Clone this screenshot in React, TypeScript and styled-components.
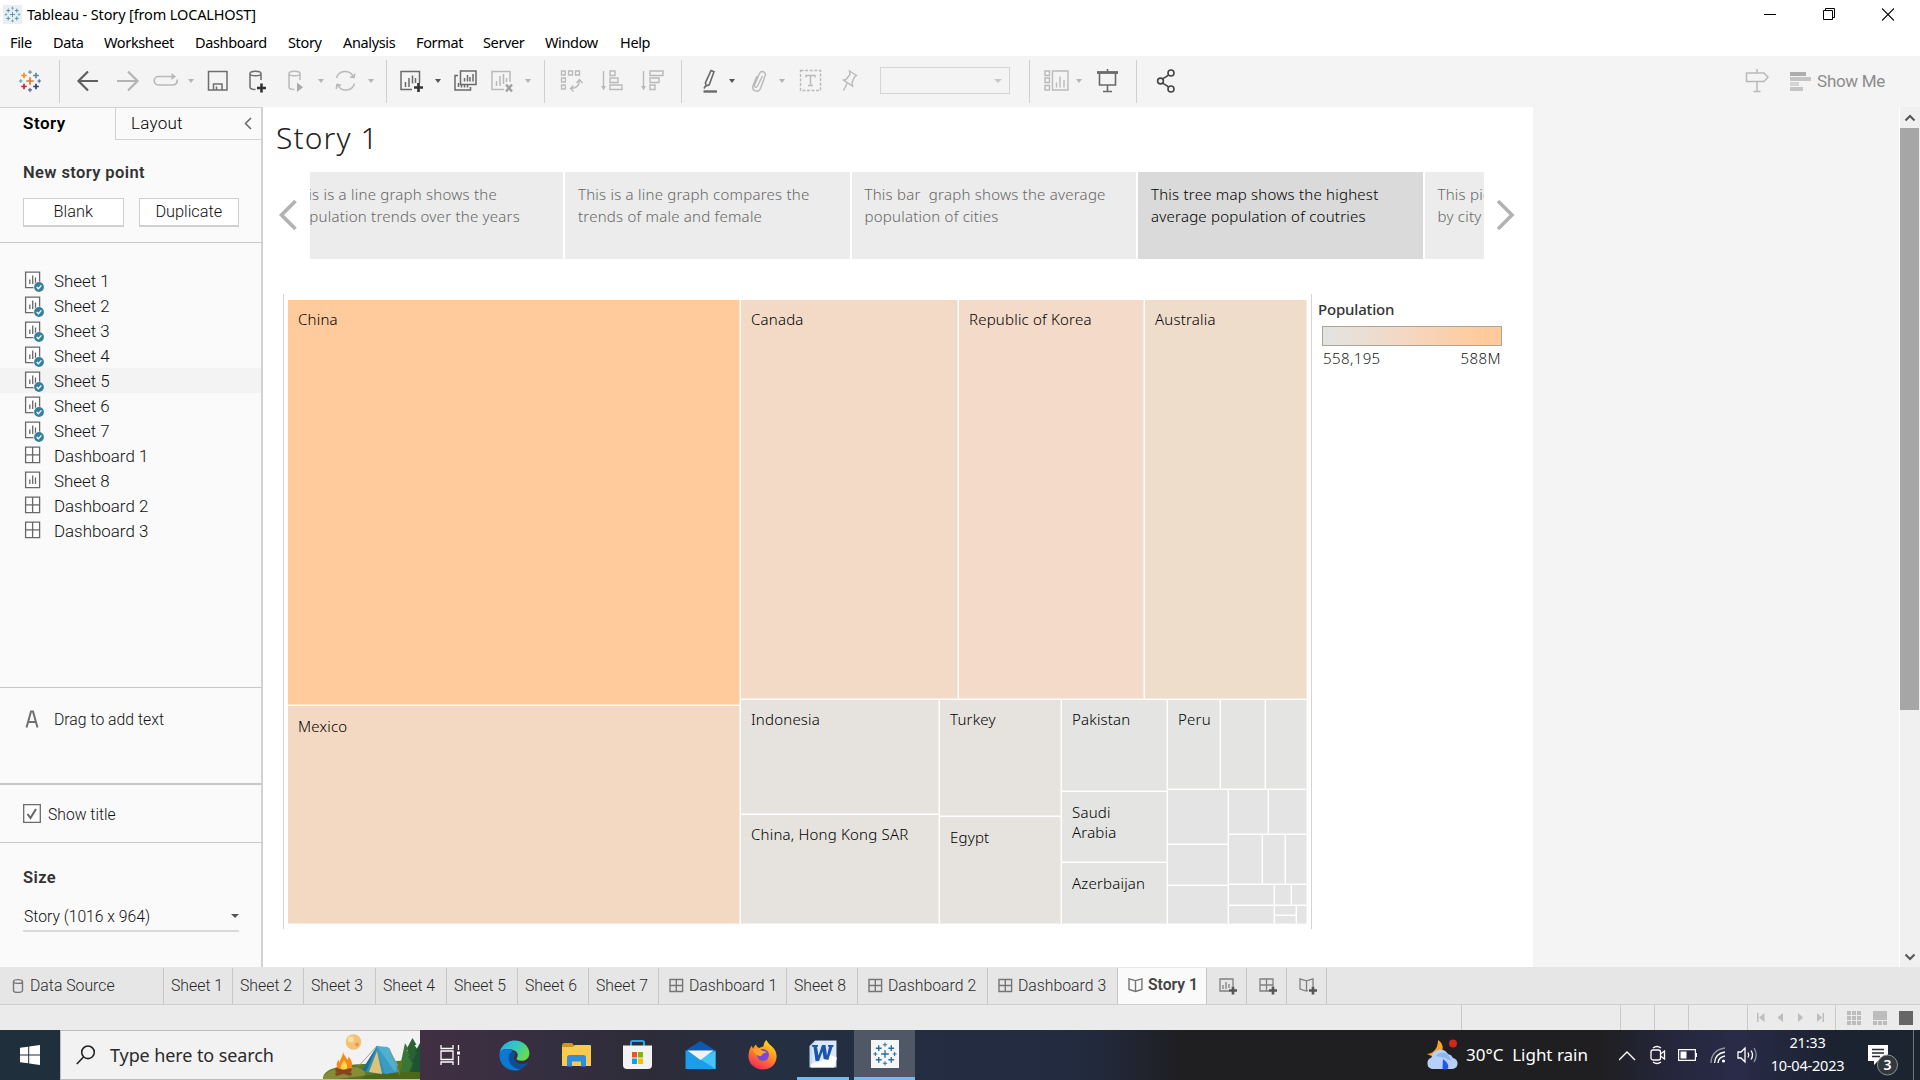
import React from "react";
import styled, { createGlobalStyle, css } from "styled-components";

const Global = createGlobalStyle`
  * { box-sizing: border-box; }
  html, body { margin: 0; padding: 0; overflow: hidden; background: #fff; }
  body { font-family: "Noto Sans", sans-serif; }
  svg { display: block; flex: none; }
`;

const UI = `Roboto, "Liberation Sans", sans-serif`;
const SYS = `"Noto Sans", sans-serif`;

/* ---------- shell ---------- */
const Shell = styled.div`
  width: 1920px; height: 1080px; display: flex; flex-direction: column; overflow: hidden; background: #fff;
`;
const TitleBar = styled.header`
  height: 28px; display: flex; align-items: center; padding: 1px 26px 0 3px; flex: none;
`;
const TitleText = styled.span`
  font: 400 14.5px/20px ${SYS}; letter-spacing: -0.14px; color: #000; margin: -1px 0 0 5px; flex: 1;
`;
const WindowButtons = styled.div`
  display: flex; gap: 47px; align-items: center; margin-top: -1px;
`;
const MenuBar = styled.nav`
  height: 28px; display: flex; gap: 21px; padding: 4px 10px 0; flex: none;
`;
const MenuItem = styled.span<{ $w: number }>`
  width: ${p => p.$w}px; font: 400 14.5px/20px ${SYS}; letter-spacing: -0.36px; color: #000; white-space: nowrap;
`;
const ToolBar = styled.div`
  height: 51px; flex: none; background: #f4f4f4; display: flex; align-items: center; padding-left: 18px;
`;
const Tool = styled.div<{ $w: number; $c?: string }>`
  width: ${p => p.$w}px; flex: none; height: 24px; margin-top: -2px; display: flex; align-items: center; color: ${p => p.$c || "#b9b9b9"};
`;
const ToolDivider = styled.div<{ $w: number }>`
  width: ${p => p.$w}px; flex: none; height: 43px; border-left: 1px solid #d0d0d0;
`;
const CaretIcon = styled.i<{ $c?: string; $r?: number }>`
  width: 0; height: 0; display: block; border: ${p => p.$r || 3.5}px solid transparent; border-bottom: 0;
  border-top: 4.5px solid ${p => p.$c || "#b4b4b4"};
`;
const ToolSelect = styled.div`
  width: 130px; height: 27px; margin-top: -2px; border: 1px solid #d4d4d4; display: flex; align-items: center; justify-content: flex-end; padding-right: 7px;
`;
const ShowMe = styled.div`
  display: flex; align-items: center; gap: 6px; margin: -2px 0 0 21px;
  font: 400 17px/22px ${UI}; letter-spacing: -0.3px; color: #8c8c8c;
`;

/* ---------- side pane ---------- */
const Main = styled.div` flex: 1; min-height: 0; display: flex; `;
const Side = styled.aside`
  width: 263px; flex: none; border-right: 2px solid #d2d2d2; background: #fafafa; display: flex; flex-direction: column;
  font: 300 17px/25px ${UI}; color: #111;
`;
const SideTabs = styled.div` display: flex; height: 33px; flex: none; border-top: 1px solid #d2d2d2; `;
const SideTab = styled.div<{ $active?: boolean }>`
  display: flex; align-items: center; color: #000;
  ${p => p.$active
    ? css`width: 115px; padding: 0 0 2px 23px; font-weight: 600; font-size: 17px; letter-spacing: .5px;`
    : css`flex: 1; padding: 0 9px 0 15px; border-left: 1px solid #d2d2d2; border-bottom: 1px solid #d2d2d2; justify-content: space-between; font-size: 17px; letter-spacing: .25px;`}
`;
const NewPoint = styled.section`
  height: 103px; padding: 19px 22px 0 23px; border-bottom: 1px solid #c8c8c8; flex: none;
`;
const Heading = styled.h3` margin: 0; font: 600 16.5px/27px ${UI}; letter-spacing: 0.4px; color: #333; `;
const ButtonRow = styled.div` display: flex; gap: 15px; margin-top: 12px; `;
const Button = styled.button`
  flex: 1; height: 29px; padding: 0; background: #fff; border: 1px solid #cfcfcf; border-bottom-width: 2px; font: 300 16.3px/24px ${UI}; color: #111;
`;
const SheetList = styled.ul` list-style: none; margin: 0; padding: 25px 0 0; height: 445px; border-bottom: 1px solid #c8c8c8; flex: none; `;
const SheetRow = styled.li<{ $hot?: boolean }>`
  height: 25px; display: flex; align-items: center; gap: 9px; padding-left: 24px; font-size: 16.9px; line-height: 26px;
  background: ${p => (p.$hot ? "#f3f3f3" : "transparent")};
  span { padding-top: 1px; }
`;
const DragText = styled.section`
  height: 97px; flex: none; border-bottom: 2px solid #c8c8c8; display: flex; padding: 19px 0 0 25px; gap: 15px; font-size: 15.8px;
`;
const TitleToggle = styled.label`
  height: 58px; flex: none; border-bottom: 1px solid #c8c8c8; display: flex; align-items: center; padding-left: 23px; gap: 7px; font-size: 15.7px; line-height: 20px;
  span { padding-top: 2px; }
`;
const SizeBox = styled.section` flex: 1; padding: 21px 22px 0 23px; `;
const SizeSelect = styled.div`
  height: 33px; margin-top: 8px; border-bottom: 2px solid #dadada; display: flex; align-items: center; justify-content: space-between;
  padding: 3px 0 0 1px; font-size: 15.7px;
`;

/* ---------- story ---------- */
const Story = styled.main` width: 1270px; flex: none; background: #fff; padding-left: 13px; `;
const StoryTitle = styled.h1`
  margin: 0; height: 65px; padding-top: 9px; font: 350 30px/44px ${SYS}; color: #222; letter-spacing: 1.1px;
`;
const Navigator = styled.div` display: flex; height: 87px; align-items: center; `;
const NavArrow = styled.div<{ $w: number; $pad: number }>` width: ${p => p.$w}px; padding: 0 0 2px ${p => p.$pad}px; flex: none; `;
const CaptionStrip = styled.div`
  width: 1174px; height: 87px; overflow: hidden; display: flex; gap: 2px; justify-content: flex-start;
`;
const Caption = styled.div<{ $on?: boolean; $cut?: number }>`
  flex: none; width: ${p => (p.$cut ? 285 : 284.5)}px; height: 87px; margin-left: ${p => (p.$cut ? -p.$cut : 0)}px; padding: 11px 13px;
  background: ${p => (p.$on ? "#dadada" : "#ececec")}; color: ${p => (p.$on ? "#000" : "#666")};
  font: 300 15px/22px ${SYS}; letter-spacing: 0.23px; white-space: pre;
`;
const VizRow = styled.div` display: flex; margin: 35px 0 0 7px; height: 635px; `;
const MapFrame = styled.div`
  width: 1029px; flex: none; border-left: 1px solid #d4d4d4; border-right: 1px solid #d4d4d4; padding: 5px 4px 5px 3px;
`;
const Split = styled.div<{ $dir: "row" | "column"; $size?: number }>`
  display: flex; flex-direction: ${p => p.$dir}; min-width: 0; min-height: 0;
  flex: ${p => (p.$size ? `0 0 ${p.$size}px` : "1 1 0")};
`;
const Cell = styled.div<{ $size?: number; $bg?: string; $pt?: number }>`
  flex: ${p => (p.$size ? `0 0 ${p.$size}px` : "1 1 0")}; min-width: 0; min-height: 0; overflow: hidden;
  background: ${p => p.$bg || "#e4e4e4"};
  border: solid #fff; border-width: 1px 0 0 1px; box-shadow: inset -1px -1px 0 rgba(255,255,255,.45);
  padding: ${p => p.$pt || 9}px 0 0 10px; font: 300 15px/20px ${SYS}; letter-spacing: 0.2px; color: #000;
`;
const Legend = styled.div` padding: 5px 0 0 6px; width: 191px; font: 300 15px/20px ${SYS}; color: #222; `;
const LegendTitle = styled.div` font-weight: 500; color: #333; letter-spacing: -0.18px; `;
const Ramp = styled.div`
  margin: 7px 0 2px 4px; height: 20px; width: 180px; border: 1px solid #aaa895;
  background: linear-gradient(90deg, #e3e3e3, #eadfd6 20%, #f5d6bf 50%, #ffcb9d 88%);
`;
const RampLabels = styled.div` display: flex; justify-content: space-between; padding-left: 5px; width: 183px; letter-spacing: .4px; `;
const Gutter = styled.div` flex: 1; background: #f4f4f4; `;
const Scroll = styled.div`
  width: 21px; background: #f0f0f0; border-left: 1px solid #fff; display: flex; flex-direction: column; justify-content: space-between;
`;
const ScrollBtn = styled.div` height: 21px; display: flex; align-items: center; justify-content: center; `;
const Thumb = styled.div` height: 582px; width: 19px; background: #a6a6a6; margin-bottom: auto; `;

/* ---------- bottom ---------- */
const SheetTabs = styled.div` height: 38px; flex: none; background: #e6e6e6; display: flex; border-bottom: 1px solid #cfcfcf; padding-top: 1px; `;
const SheetTab = styled.div<{ $w: number; $on?: boolean; $pl?: number }>`
  width: ${p => p.$w}px; flex: none; padding: 0 0 ${p => (p.$on ? 3 : 0)}px ${p => p.$pl ?? 7}px; border-right: 1px solid #c6c6c6; display: flex; align-items: center; gap: 5px;
  font: ${p => (p.$on ? 600 : 300)} ${p => (p.$on ? 15.7 : 15.8)}px/20px ${UI}; color: ${p => (p.$on ? "#444" : "#2a2a2a")}; background: ${p => (p.$on ? "#fafafa" : "transparent")}; white-space: nowrap;
`;
const Status = styled.div` height: 25px; flex: none; background: #ebebeb; display: flex; padding-left: 1461px; `;
const StatusCell = styled.div<{ $w: number; $pl?: number; $gap?: number }>`
  width: ${p => p.$w}px; flex: none; border-left: 1px solid #c9c9c9; display: flex; align-items: center; padding-left: ${p => p.$pl || 0}px; gap: ${p => p.$gap || 0}px;
`;
const TaskBar = styled.footer`
  height: 50px; flex: none; display: flex;
  background: linear-gradient(90deg, #1f2f3c 0 60px, #412f42 420px, #332f40 560px, #2e2b38 650px, #242f42 770px, #232b40 1080px, #1f1f22 1180px, #1f1f22 1600px, #26273f 1680px, #292b48 1740px, #1b2230 1830px, #1b2530);
`;
const StartBtn = styled.div` width: 60px; display: flex; align-items: center; justify-content: center; `;
const Search = styled.div`
  width: 360px; background: #f2f2f2; border: 1px solid #bcbcbc; border-right: 0; display: flex; align-items: center; padding-left: 15px;
`;
const SearchText = styled.span` font: 400 18px/26px ${SYS}; color: #2a2a2a; margin-left: 14px; flex: 1; white-space: nowrap; letter-spacing: -0.1px; `;
const TaskButton = styled.div<{ $w: number; $on?: boolean; $run?: boolean }>`
  width: ${p => p.$w}px; height: 50px; flex: none; display: flex; align-items: center; justify-content: center;
  background: ${p => (p.$on ? "#505766" : "transparent")};
  border-bottom: ${p => (p.$run || p.$on ? "3px solid #76b9ed" : "0")};
`;
const Spacer = styled.div<{ $w?: number }>` ${p => (p.$w ? css`width: ${p.$w}px; flex: none;` : css`flex: 1;`)} `;
const Weather = styled.div`
  display: flex; align-items: center; font: 400 17px/24px ${SYS}; color: #fff; width: 193px; flex: none; white-space: pre; letter-spacing: -0.02px;
`;
const Tray = styled.div` display: flex; align-items: center; width: 151px; flex: none; `;
const TraySlot = styled.div<{ $w: number }>` width: ${p => p.$w}px; flex: none; `;
const Clock = styled.div`
  width: 75px; flex: none; text-align: center; color: #fff; font: 400 14.5px/23px ${SYS}; padding-top: 1px; letter-spacing: -0.2px; white-space: nowrap;
`;
const Notice = styled.div` width: 68px; padding: 13px 0 0 21px; flex: none; display: flex; `;
const Peek = styled.div` width: 1px; background: #6d737b; `;

/* ---------- icons ---------- */
const crosses: [number, number, number, string][] = [
  [12, 12, 4, "#e8762c"], [5.5, 6, 3, "#eb9129"], [18.5, 6, 3, "#5b879b"], [5.5, 18, 3, "#c72037"], [18.5, 18, 3, "#1f447e"],
  [12, 2.3, 2.2, "#7099a6"], [12, 21.7, 2.2, "#5b6591"], [2, 12, 2, "#7099a6"], [22, 12, 2, "#5b6591"],
];
const Logo = ({ size, mono, bg }: { size: number; mono?: string; bg?: string }) => (
  <svg width={size} height={size} viewBox={bg ? "-2.5 -2.5 29 29" : "-1 -1 26 26"}>
    {bg && <rect x="-2.5" y="-2.5" width="29" height="29" fill={bg} />}
    {crosses.map(([x, y, r, c], i) => (
      <path key={i} d={`M${x - r} ${y}h${2 * r}M${x} ${y - r}v${2 * r}`} stroke={mono || c} strokeWidth={(r > 2.5 ? 1.8 : 1.3) * (mono ? 0.8 : 1)} />
    ))}
  </svg>
);
const S = ({ w = 24, h = 24, sw = 1.6, children }: { w?: number; h?: number; sw?: number; children: React.ReactNode }) => (
  <svg width={w} height={h} viewBox={`0 0 ${w} ${h}`} fill="none" stroke="currentColor" strokeWidth={sw}>{children}</svg>
);
const Caret = ({ w, c }: { w: number; c?: string }) => <Tool $w={w}><CaretIcon $c={c} /></Tool>;

const SheetIcon = ({ done }: { done?: boolean }) => (
  <svg width="21" height="23" viewBox="0 0 21 23" fill="none" stroke="#686868" strokeWidth="1.3">
    <path d="M1.6 3.100h14v15.600h-14z" fill="#fff" /><path d="M5.800 10.500v4.500M8.700 6.500v8.500M11.500 8.500v6.500" />
    {done && <><circle cx="15" cy="18" r="5.600" fill="#fafafa" stroke="none" /><circle cx="15" cy="18" r="4.900" fill="#357f9f" stroke="none" /><path d="M12.700 18l1.700 1.800 3-3.400" stroke="#fff" /></>}
  </svg>
);
const DashIcon = ({ pane }: { pane?: boolean }) => pane ? (
  <svg width="21" height="23" viewBox="0 0 21 23" fill="none" stroke="#686868" strokeWidth="1.3"><path d="M1.6 3.100h14v15.600h-14zM8.600 3.100v15.600" fill="#fff" /><path d="M1.6 10.900h14" /></svg>
) : (
  <svg width="15" height="16" viewBox="0 0 15 16" fill="none" stroke="#757575" strokeWidth="1.4"><path d="M1 1.500h12.600v12H1zM7.300 1.500v12M1 7.500h12.600" /></svg>
);
const BookIcon = () => (
  <svg width="15" height="16" viewBox="0 0 15 16" fill="none" stroke="#757575" strokeWidth="1.4"><path d="M7.500 3.600L1 1.800v10.600l6.500 2 6.400-2V1.800zM7.500 3.600v10.800" /></svg>
);
const Plus = () => <path d="M14 9.500v8M10 13.500h8" stroke="#555" strokeWidth="2.600" />;

const warm = "#e4e4e3";

const FullMap = styled.div` display: flex; height: 625px; width: 1020px; `;
const MiniCell = styled(Cell)` padding: 0; `;

const TreeMap = () => (
  <FullMap>
    <Split $dir="column" $size={453}>
      <Cell $size={406} $bg="#ffcb9d">China</Cell>
      <Cell $bg="#f4d9c2" $pt={10}>Mexico</Cell>
    </Split>
    <Split $dir="column">
      <Split $dir="row" $size={400}>
        <Cell $size={218} $bg="#f3dac7">Canada</Cell>
        <Cell $size={186} $bg="#f3dac9">Republic of Korea</Cell>
        <Cell $bg="#efddcc">Australia</Cell>
      </Split>
      <Split $dir="row">
        <Split $dir="column" $size={199}>
          <Cell $size={115} $bg="#e6e3de">Indonesia</Cell>
          <Cell $bg="#e6e3de">China, Hong Kong SAR</Cell>
        </Split>
        <Split $dir="column" $size={122}>
          <Cell $size={117} $bg="#e6e3de">Turkey</Cell>
          <Cell $bg="#e6e3de" $pt={10}>Egypt</Cell>
        </Split>
        <Split $dir="column" $size={106}>
          <Cell $size={92} $bg={warm}>Pakistan</Cell>
          <Cell $size={71} $bg={warm} $pt={10}>Saudi<br />Arabia</Cell>
          <Cell $bg={warm} $pt={10}>Azerbaijan</Cell>
        </Split>
        <Split $dir="column">
          <Split $dir="row" $size={90}>
            <Cell $size={53} $bg={warm}>Peru</Cell><Cell $size={45} $bg={warm} /><Cell $bg={warm} />
          </Split>
          <Split $dir="row">
            <Split $dir="column" $size={61}>
              <Cell $size={55} /><Cell $size={41} /><Cell />
            </Split>
            <Split $dir="column">
              <Split $dir="row" $size={45}><Cell $size={40} /><Cell /></Split>
              <Split $dir="row" $size={50}><Cell $size={34} /><Cell $size={23} /><Cell /></Split>
              <Split $dir="row">
                <Split $dir="column" $size={46}><MiniCell $size={21} /><MiniCell /></Split>
                <Split $dir="column">
                  <Split $dir="row" $size={21}><MiniCell $size={17} /><MiniCell /></Split>
                  <Split $dir="row">
                    <Split $dir="column" $size={22}><MiniCell $size={10} /><MiniCell /></Split>
                    <MiniCell />
                  </Split>
                </Split>
              </Split>
            </Split>
          </Split>
        </Split>
      </Split>
    </Split>
  </FullMap>
);

const sheets: [string, "d" | "s" | "b"][] = [
  ["Sheet 1", "d"], ["Sheet 2", "d"], ["Sheet 3", "d"], ["Sheet 4", "d"], ["Sheet 5", "d"], ["Sheet 6", "d"], ["Sheet 7", "d"],
  ["Dashboard 1", "b"], ["Sheet 8", "s"], ["Dashboard 2", "b"], ["Dashboard 3", "b"],
];
const menus: [string, number][] = [["File", 22], ["Data", 30], ["Worksheet", 70], ["Dashboard", 72], ["Story", 34], ["Analysis", 52], ["Format", 46], ["Server", 41], ["Window", 54], ["Help", 32]];
const tabs: [string, number, boolean][] = [["Sheet 1", 69, false], ["Sheet 2", 71, false], ["Sheet 3", 72, false], ["Sheet 4", 71, false], ["Sheet 5", 71, false], ["Sheet 6", 71, false], ["Sheet 7", 70, false], ["Dashboard 1", 128, true], ["Sheet 8", 71, false], ["Dashboard 2", 130, true], ["Dashboard 3", 130, true]];

const Cyl = <path d="M2 4.500C2 1.500 13 1.500 13 4.500S2 7.500 2 4.500zV18c0 2 2.500 2.500 5.500 2.500M13 4.500V11" />;

const ToolIcons = () => (
  <ToolBar>
    <Tool $w={41}><Logo size={24} /></Tool>
    <ToolDivider $w={17} />
    <Tool $w={40} $c="#5f5f5f"><S sw={2.2}><path d="M22 12H3M12 2.500L2.500 12l9.500 9.500" /></S></Tool>
    <Tool $w={37} $c="#b4b4b4"><S sw={2.2}><path d="M1 12h20M12 2.500l9.500 9.500-9.500 9.500" /></S></Tool>
    <Tool $w={35}><S w={26} sw={1.7}><path d="M19 7.500H5.500a4.200 4.200 0 0 0 0 8.500H20a4.200 4.200 0 0 0 4-5.500" /><path d="M18.500 4v7l4.500-3.500z" fill="currentColor" stroke="none" /></S></Tool>
    <Caret w={19} />
    <Tool $w={41} $c="#6e6e6e"><S w={22} sw={1.5}><path d="M1.500 2.500h18.500v18.500h-18.500zM6.500 21v-6h8.500v6M9.500 21v-3.500" /></S></Tool>
    <Tool $w={39} $c="#6e6e6e"><S w={22} sw={1.500}>{Cyl}<path d="M13.500 14.500v9M9 19h9" stroke="#333" strokeWidth="2.600" /></S></Tool>
    <Tool $w={31}><S w={22} sw={1.500}>{Cyl}<path d="M10 13.500v9.500l6-4.700z" fill="#aaa" stroke="none" /></S></Tool>
    <Caret w={16} />
    <Tool $w={34}><S w={23} sw={1.500}><path d="M2.500 9a9 9 0 0 1 17-1M20.500 14.500a9 9 0 0 1-17 1M20.800 4.500l-.8 4-4-.8M2.200 20l.8-4.500 4 .8" /></S></Tool>
    <Caret w={18} />
    <ToolDivider $w={13} />
    <Tool $w={36} $c="#6a6a6a"><S w={25} sw={1.500}><path d="M13 20.500H2V2.500h18.500V14M6.500 13v5M10 9v9M13.500 6.500v8M16.500 9v5" /><path d="M19.500 14v9M15 18.500h9" stroke="#333" strokeWidth="2.600" /></S></Tool>
    <Caret w={18} c="#555" />
    <Tool $w={37} $c="#6a6a6a"><S w={26} sw={1.500}><path d="M7.500 2h15.500v13.500h-15.500zM11.500 12.500V9M14.500 12.500V6M17 12.500V8M20 12.500V5M5 6.500H2V21h15.500v-3M5.500 18v-4M8.500 18.500v-2.500M11.500 18.500v-2.500M14.500 18.500v-2.500" /></S></Tool>
    <Tool $w={35}><S w={25} sw={1.500}><path d="M14 20.500H2V2.500h18V13M6.500 12v5M10 7v10M13.500 5v10M16.500 9v4" /><path d="M16 15.500l6 7M22 15.500l-6 7" stroke="#a0a0a0" strokeWidth="2.400" /></S></Tool>
    <Caret w={19} />
    <ToolDivider $w={16} />
    <Tool $w={41}><S w={24} sw={1.300}><path d="M1.500 2h3.800v4H1.500zM8.500 2h4v4h-4zM15.500 2h4v4h-4zM1.500 9h3.800v4H1.500zM1.500 16h3.800v4H1.500zM10.500 19.500c6 0 9-3 9-8.500M13.500 16.500l-3 3 3 3M16.500 14l3-3.500 3 3.500" /></S></Tool>
    <Tool $w={40}><S w={24} sw={1.400}><path d="M2.500 2v17M9 2h5v4.500H9zM9 9h8v4.500H9zM9 16h12v4.500H9z" /><path d="M0 17l2.500 4.500L5 17z" fill="currentColor" stroke="none" /></S></Tool>
    <Tool $w={40}><S w={24} sw={1.400}><path d="M2.500 2v17M9 2h13v4.500H9zM9 9h9v4.500H9zM9 16h5v4.500H9z" /><path d="M0 17l2.500 4.500L5 17z" fill="currentColor" stroke="none" /></S></Tool>
    <ToolDivider $w={21} />
    <Tool $w={27} $c="#6a6a6a"><S w={20} sw={1.600}><path d="M9 1.500l3 1.300-4.800 13-3 1.200-.8-3.200zM3.500 17L2 19.500" /><path d="M1.500 22.500h13.500" strokeWidth="2.400" /></S></Tool>
    <Caret w={21} c="#555" />
    <Tool $w={29}><S w={18} sw={1.400}><path d="M12.500 7L7.500 17c-1.500 2.500-3.500 1-3-1L9.500 4.500c1.500-3.500 7-2 5.500 2.500L10.500 19.500c-2 4.500-9 3-7.500-3L7 7" /></S></Tool>
    <Caret w={20} />
    <Tool $w={42}><S w={24} sw={1.400}><path d="M1.500 1.500h20v20h-20z" strokeDasharray="3 1.600" /><path d="M7 8.500V6.500h9v2M11.500 6.500v10M9 16.500h5" /></S></Tool>
    <Tool $w={39}><S w={20} sw={1.400}><path d="M8.500 2l7 4.500-2 1.500-2.500 5.500.5 3.500-9-6 2.500-.5 4-5zM6 14.500l-3.500 7" /></S></Tool>
    <ToolSelect><CaretIcon $c="#c8c8c8" $r={4} /></ToolSelect>
    <Spacer $w={19} />
    <ToolDivider $w={15} />
    <Tool $w={32}><S w={26} sw={1.400}><path d="M1 2h4.500v4.500H1zM1 9h4.500v4.500H1zM1 16.500h4.500V21H1zM8.500 2h15.500v19H8.500zM12.500 13.500v5M16 7.500v11M20 11v7.500" /></S></Tool>
    <Caret w={20} />
    <Tool $w={40} $c="#6a6a6a"><S w={24} sw={1.600}><path d="M3.500 4v12h16V4M11.500 0v3M11.500 16v6.500M7 22.500h9" /><path d="M1 3.500h21" strokeWidth="2.800" /></S></Tool>
    <ToolDivider $w={20} />
    <Tool $w={30} $c="#444"><S w={22} sw={1.600}><circle cx="4.500" cy="12" r="2.900" /><circle cx="15" cy="4" r="3" /><circle cx="15" cy="20" r="3" /><path d="M6.500 9.800C9 8.500 11 7.500 12.500 6M6.500 14.200c2.500 1.300 4.500 2.300 6 3.800" /></S></Tool>
    <Spacer />
    <Tool $w={24}><S w={24} sw={1.500}><path d="M1.500 4h17.500l4 4.200-4 4.300H1.500zM12 0v3.500M12 12.500v10M8.500 22.500h7" /></S></Tool>
    <ShowMe>
      <svg width="21" height="20" viewBox="0 0 21 20"><path d="M0 1h16v4H0z" fill="#adadad" /><path d="M0 6h21v4H0zM0 16h13v4H0z" fill="#c4c4c4" /><path d="M0 11h9v4H0z" fill="#d4d4d4" /></svg>
      Show Me
    </ShowMe>
    <Spacer $w={35} />
  </ToolBar>
);

const TaskIcons = () => (
  <>
    <TaskButton $w={60}><svg width="21" height="20" viewBox="0 0 21 20" fill="none" stroke="#fff" strokeWidth="1.300"><path d="M1 0v3.500h12V0M1 6h12v8.500H1zM1 20v-3h12v3M18.500 0v5M18.500 11v9" /><path d="M17 6.500h3v3h-3z" fill="#fff" stroke="none" /></svg></TaskButton>
    <Spacer $w={4} />
    <TaskButton $w={60}>
      <svg width="31" height="31" viewBox="0 0 31 31">
        <defs><linearGradient id="eg" x1="0" y1="0" x2="1" y2=".5"><stop offset="0" stopColor="#2ba8e8" /><stop offset=".5" stopColor="#35c4c9" /><stop offset="1" stopColor="#62dd4f" /></linearGradient></defs>
        <path d="M.7 12.500C2 5.500 8.500.6 15.500.6 24 .6 30.400 6.500 30.400 13.500c0 4.500-3.500 7.300-7.600 7.300-4 0-5.600-1.300-5-2.500 1.500-2.500 1.500-5.300-1.500-7.300C11 8 3.500 8 .7 12.500z" fill="url(#eg)" />
        <path d="M.7 12.500C3.500 8 10 8 14 11c-3.500 2-4.500 6-3.500 9.500 1.500 5 6 8.500 11.500 8.500-3 1.500-6 1.700-8.500 1.300C4.500 29 -.8 21 .7 12.500z" fill="#0b78d4" />
        <path d="M14 11.500c-3 1-4.500 3-4.500 6 0 6.500 5.500 11.500 12.500 11.500 3-1.300 5-3.200 6.500-5.500.3-.5-.3-.9-.8-.6-5 2.600-11.500.6-12.700-4.400-.3-1.500.2-3 1-4 .7-1-.4-3.300-2-3z" fill="#0c4f95" />
      </svg>
    </TaskButton>
    <Spacer $w={2} />
    <TaskButton $w={60}>
      <svg width="29" height="25" viewBox="0 0 29 25"><path d="M0 2.500Q0 0 2 0h8l3 3.500H0z" fill="#d9960a" /><path d="M0 3.500h11l2-1.500h15q1 0 1 1V23H0z" fill="#fccb4a" /><path d="M5 23.500v-9q0-2.500 2.500-2.500h14q2.500 0 2.500 2.500v9h-5v-5h-9v5z" fill="#2d8fe2" /></svg>
    </TaskButton>
    <Spacer $w={1} />
    <TaskButton $w={60}>
      <svg width="29" height="30" viewBox="0 0 29 30"><path d="M8 6V2.500Q8 1 9.500 1h10Q21 1 21 2.500V6" fill="none" stroke="#20a8e8" strokeWidth="2" /><path d="M0 5.500h29V25q0 4-4 4H4q-4 0-4-4z" fill="#f3f3f3" /><path d="M9 12h5v5.500H9z" fill="#f25022" /><path d="M15 12h5v5.500h-5z" fill="#7fba00" /><path d="M9 18.500h5V24H9z" fill="#00a4ef" /><path d="M15 18.500h5V24h-5z" fill="#ffb900" /></svg>
    </TaskButton>
    <Spacer $w={3} />
    <TaskButton $w={60}>
      <svg width="31" height="29" viewBox="0 0 31 29"><path d="M.5 9.500L15.500 0l15 9.500z" fill="#0a5bb0" /><path d="M.5 9.500h30V28H.5z" fill="#1b9de8" /><path d="M30.500 10v18L15 18z" fill="#45c5f7" /><path d="M2.500 9.500h26L15.500 19z" fill="#f2f2f2" /></svg>
    </TaskButton>
    <Spacer $w={2} />
    <TaskButton $w={60}>
      <svg width="29" height="30" viewBox="0 0 29 30">
        <defs><linearGradient id="ff" x1=".8" y1="0" x2=".3" y2="1"><stop offset="0" stopColor="#ffe226" /><stop offset=".45" stopColor="#ff9320" /><stop offset="1" stopColor="#f5255f" /></linearGradient></defs>
        <path d="M18.500 0c1 3 4 5 6 7 3 3 4.500 6.500 4 11-.8 7-6.500 11.500-13.500 11.500C7 29.500 .5 24 .5 16.500c0-4 1-8.500 3.500-11 0 1.500.6 2.500 1.200 3.200C6 6 7.500 5.300 8 4.500c.3 1.500 1.500 3 3.500 3.500 2-1 3-1.500 4-1.500C15.500 4 16.500 1.500 18.500 0z" fill="url(#ff)" />
        <circle cx="15" cy="15" r="6" fill="#7a48d8" /><path d="M5 9.500c3-2 7.500-1 9.500 1.500 2 0 3.500.5 4 1.500-2 0-4.500 1.500-5.500 3.500-4 0-7-2.500-8-6.500z" fill="#ffa524" />
      </svg>
    </TaskButton>
    <Spacer $w={5} />
    <TaskButton $w={52} $run>
      <svg width="28" height="28" viewBox="0 0 28 28"><path d="M6 .5h21.500v27H.5V6z" fill="#c4d8f4" /><path d="M7 1h20v25H3V7z" fill="#dce8f8" /><path d="M3 5h6v1.500l-1 .5 1.500 8.500L13 5h3.500l1.500 10.500L20 7l-1-.5V5h5.500v1.500l-1 .5-4.500 14h-4l-1.500-9.500L10 21H6.500L4.500 7 3 6.500z" fill="#1a55b0" /><path d="M2 24l11-3 1-2 6 1 1-5 7 2.500-3 10H2z" fill="#fff" /></svg>
    </TaskButton>
    <Spacer $w={5} />
    <TaskButton $w={61} $on><Logo size={28} mono="#2c6f9c" bg="#f6f6f6" /></TaskButton>
  </>
);

const CampScene = () => (
  <svg width="97" height="48" viewBox="0 0 97 48">
    <path d="M0 48c0-10 16-14 40-15 25-1 34-5 57-3v18z" fill="#5c7a1e" /><path d="M0 48c1-8 14-12 28-12 9 0 16 4 14 8l-4 4z" fill="#a39a45" opacity=".6" />
    <path d="M14 48q40-5 83-10v10z" fill="#3d5c14" opacity=".6" />
    <circle cx="30.500" cy="11" r="7.800" fill="#f3c274" /><circle cx="28" cy="8.500" r="3" fill="#fadf9f" /><circle cx="34" cy="13.500" r="2" fill="#dc9d5c" />
    <path d="M89.500 7l4 7h-2l4 6h-1l2 7v14H80q-3-1-1-3l2-5h-2l4-7h-2l4-7h-2z" fill="#2b6234" /><path d="M82 12l3.500 6h-2l3.500 7h-2l4 8-3 8h-9l3-10h-2z" fill="#3a7636" /><path d="M97 12v29h-9l3-10h-2l5-10h-2z" fill="#1f5230" />
    <path d="M54 15l-15 24 6 1.500 10-26z" fill="#1f6d92" /><path d="M54 15l-11 26 22 2z" fill="#2e92b7" /><path d="M54 20l-8 21 13 2z" fill="#dec377" /><path d="M55 15l-1 4 8 24 14-2-13-22z" fill="#3b9bc0" /><path d="M54 15l11 1 10 18-3 7z" fill="#4fb0d0" />
    <path d="M54 15L32 39M66 17l11 27" stroke="#8a8a80" strokeWidth=".8" />
    <path d="M20 21c1 4 4 5 4 8 1-1 1.500-2 1.500-3.500 4 5 5 9 2 13-3 3-10 3-12 0-3-4-2-7 .5-10 0 2 .5 3 1 3 0-4 3-6 3-10.500z" fill="#f58a1d" /><path d="M21 29c3 4 4 6 2.500 9h-5c-2-3 .5-5 2.500-9z" fill="#ffd84a" />
    <path d="M14 39l13 4M27 39l-13 4" stroke="#86431f" strokeWidth="3.500" strokeLinecap="round" />
  </svg>
);

export default function App() {
  return (
    <Shell>
      <Global />
      <TitleBar>
        <Logo size={19} mono="#4f93b8" bg="#e9eef1" />
        <TitleText>Tableau - Story [from LOCALHOST]</TitleText>
        <WindowButtons>
          <svg width="12" height="13" viewBox="0 0 12 13"><path d="M0 6.500h12" stroke="#000" /></svg>
          <svg width="12" height="13" viewBox="0 0 12 13" fill="none" stroke="#000"><path d="M.5 2.500h9v9h-9zM2.500 2.500v-2h9v9h-2" /></svg>
          <svg width="12" height="13" viewBox="0 0 12 13"><path d="M0 .5l12 12M12 .5l-12 12" stroke="#000" strokeWidth="1.100" /></svg>
        </WindowButtons>
      </TitleBar>
      <MenuBar>{menus.map(([m, w]) => <MenuItem key={m} $w={w}>{m}</MenuItem>)}</MenuBar>
      <ToolIcons />
      <Main>
        <Side>
          <SideTabs>
            <SideTab $active>Story</SideTab>
            <SideTab>Layout<svg width="8" height="14" viewBox="0 0 8 14"><path d="M7 1L1.500 6.500 7 12" fill="none" stroke="#666" strokeWidth="1.500" /></svg></SideTab>
          </SideTabs>
          <NewPoint>
            <Heading>New story point</Heading>
            <ButtonRow><Button>Blank</Button><Button>Duplicate</Button></ButtonRow>
          </NewPoint>
          <SheetList>
            {sheets.map(([n, k]) => (
              <SheetRow key={n} $hot={n === "Sheet 5"}>{k === "b" ? <DashIcon pane /> : <SheetIcon done={k === "d"} />}<span>{n}</span></SheetRow>
            ))}
          </SheetList>
          <DragText>
            <svg width="14" height="25" viewBox="0 0 14 25"><path d="M1.500 20.500L6 4.500h2l4.500 16M3 15h8" fill="none" stroke="#707070" strokeWidth="2" /></svg>
            Drag to add text
          </DragText>
          <TitleToggle>
            <svg width="18" height="19" viewBox="0 0 18 19"><path d="M.7.700h16.600v17.600H.7z" fill="#fff" stroke="#6a6a6a" strokeWidth="1.300" /><path d="M4.500 10l3 4 5.500-9" fill="none" stroke="#666" strokeWidth="2" /></svg>
            <span>Show title</span>
          </TitleToggle>
          <SizeBox>
            <Heading>Size</Heading>
            <SizeSelect>Story (1016 x 964)<CaretIcon $c="#555" $r={4.5} /></SizeSelect>
          </SizeBox>
        </Side>
        <Story>
          <StoryTitle>Story 1</StoryTitle>
          <Navigator>
            <NavArrow $w={34} $pad={2}><svg width="19" height="32" viewBox="0 0 19 32"><path d="M17.500 2L3.500 16l14 14" fill="none" stroke="#b2b2b2" strokeWidth="3.600" /></svg></NavArrow>
            <CaptionStrip>
              <Caption $cut={32}>{"This is a line graph shows the\npopulation trends over the years"}</Caption>
              <Caption>{"This is a line graph compares the\ntrends of male and female"}</Caption>
              <Caption>{"This bar  graph shows the average\npopulation of cities"}</Caption>
              <Caption $on>{"This tree map shows the highest\naverage population of coutries"}</Caption>
              <Caption>{"This pie chart\nby city"}</Caption>
            </CaptionStrip>
            <NavArrow $w={34} $pad={12}><svg width="19" height="32" viewBox="0 0 19 32"><path d="M2 2l14 14L2 30" fill="none" stroke="#b2b2b2" strokeWidth="3.600" /></svg></NavArrow>
          </Navigator>
          <VizRow>
            <MapFrame><TreeMap /></MapFrame>
            <Legend>
              <LegendTitle>Population</LegendTitle>
              <Ramp />
              <RampLabels><span>558,195</span><span>588M</span></RampLabels>
            </Legend>
          </VizRow>
        </Story>
        <Gutter />
        <Scroll>
          <ScrollBtn><svg width="12" height="8" viewBox="0 0 12 8"><path d="M1.500 6.500L6 2l4.500 4.500" fill="none" stroke="#555" strokeWidth="2" /></svg></ScrollBtn>
          <Thumb />
          <ScrollBtn><svg width="12" height="8" viewBox="0 0 12 8"><path d="M1.500 1.500L6 6l4.500-4.500" fill="none" stroke="#555" strokeWidth="2" /></svg></ScrollBtn>
        </Scroll>
      </Main>
      <SheetTabs>
        <SheetTab $w={164} $pl={12}>
          <svg width="13" height="16" viewBox="0 0 13 16" fill="none" stroke="#777" strokeWidth="1.400"><path d="M1.500 3.500C1.500 1 10.500 1 10.500 3.500S1.500 6 1.500 3.500zV12.500c0 2.500 9 2.500 9 0V3.500" /></svg>
          Data Source
        </SheetTab>
        {tabs.map(([n, w, d]) => <SheetTab key={n} $w={w} $pl={d ? 10 : 7}>{d && <DashIcon />}{n}</SheetTab>)}
        <SheetTab $w={89} $pl={10} $on><BookIcon />Story 1</SheetTab>
        <SheetTab $w={40} $pl={12}><svg width="19" height="19" viewBox="0 0 19 19" fill="none" stroke="#808080" strokeWidth="1.300"><path d="M10 14H1V2h13v7M4 8v4M7 5v7M10 7v4" /><Plus /></svg></SheetTab>
        <SheetTab $w={40} $pl={12}><svg width="19" height="19" viewBox="0 0 19 19" fill="none" stroke="#808080" strokeWidth="1.300"><path d="M10 14H1V2h13v7M7.500 2v12M1 8h13" /><Plus /></svg></SheetTab>
        <SheetTab $w={40} $pl={12}><svg width="19" height="19" viewBox="0 0 19 19" fill="none" stroke="#808080" strokeWidth="1.300"><path d="M9 13.500l-1.500.5L1 12V1.800l6.500 2 6.500-2V9M7.500 3.800V14" /><Plus /></svg></SheetTab>
      </SheetTabs>
      <Status>
        <StatusCell $w={159} /><StatusCell $w={34} /><StatusCell $w={34} /><StatusCell $w={59} />
        <StatusCell $w={88} $pl={9}>
          <svg width="70" height="11" viewBox="0 0 70 11" fill="#bdbdbd"><path d="M0 1h1.500v9H0zM7.500 1v9L2 5.500zM26 1v9L20.500 5.500zM41 1v9l5-4.500zM60 1v9l5-4.500zM65.500 1h1.500v9h-1.500z" /></svg>
        </StatusCell>
        <StatusCell $w={84} $pl={11} $gap={12}>
          <svg width="14" height="14" viewBox="0 0 14 14" fill="#bcbcbc"><path d="M0 0h4v4H0zM5 0h4v4H5zM10 0h4v4h-4zM0 5h4v4H0zM5 5h4v4H5zM10 5h4v4h-4zM0 10h4v4H0zM5 10h4v4H5zM10 10h4v4h-4z" /></svg>
          <svg width="14" height="14" viewBox="0 0 14 14" fill="#bcbcbc"><path d="M0 0h14v9H0zM0 10h4v4H0zM5 10h4v4H5zM10 10h4v4h-4z" /></svg>
          <svg width="14" height="14" viewBox="0 0 14 14" fill="#666"><path d="M0 0h14v14H0z" /></svg>
        </StatusCell>
      </Status>
      <TaskBar>
        <StartBtn><svg width="20" height="20" viewBox="0 0 20 20" fill="#fff"><path d="M0 2.800l8.200-1.100v7.800H0zM9.200 1.500L20 0v9.500H9.200zM0 10.500h8.200v7.800L0 17.200zM9.200 10.500H20V20L9.200 18.500z" /></svg></StartBtn>
        <Search>
          <svg width="20" height="20" viewBox="0 0 20 20" fill="none" stroke="#222" strokeWidth="1.600"><circle cx="12" cy="7.300" r="6.300" /><path d="M7.500 12L.8 19" /></svg>
          <SearchText>Type here to search</SearchText>
          <CampScene />
        </Search>
        <TaskIcons />
        <Spacer />
        <Weather>
          <svg width="40" height="32" viewBox="0 0 40 32"><path d="M12 1c6 4 6 10 2 14-4 3-9 2.500-13 0 8-1 11-7 11-14z" fill="#f5a524" /><circle cx="27" cy="4.500" r="4" fill="#d0281c" /><path d="M6 30a6 6 0 0 1-.5-11.500A9 9 0 0 1 22 15a7 7 0 0 1 5 4A5.500 5.500 0 0 1 25 30z" fill="#b7d0fa" /><path d="M10 17a8 8 0 0 1 14 2l2 3q-8-4-16-5z" fill="#8fb4f2" /><path d="M17 20c4 3 6 6 5 9-1 2-5 2-5.500 0z" fill="#2156f0" /></svg>
          {"30°C  Light rain"}
        </Weather>
        <Tray>
          <TraySlot $w={31}><svg width="18" height="11" viewBox="0 0 18 11"><path d="M0 10l8-8 8 8" fill="none" stroke="#fff" strokeWidth="1.400" /></svg></TraySlot>
          <TraySlot $w={28}><svg width="16" height="20" viewBox="0 0 16 20" fill="none" stroke="#fff" strokeWidth="1.300"><rect x="1" y="5" width="9.500" height="10" rx="2" /><path d="M10.500 9l4-3v8l-4-3M3 3q4-3 8 0M3 17q4 3 8 0" /></svg></TraySlot>
          <TraySlot $w={32}><svg width="19" height="12" viewBox="0 0 19 12"><path d="M.6.600h16.800v10.800H.6zM18.500 4v4" fill="none" stroke="#fff" strokeWidth="1.200" /><path d="M2.500 2.500h6v7h-6z" fill="#fff" /></svg></TraySlot>
          <TraySlot $w={27}><svg width="16" height="17" viewBox="0 0 16 17" fill="none" stroke="#fff" strokeWidth="1.300"><path d="M1 16Q1.500 3 15 1" opacity=".5" /><path d="M4.500 16Q5 6.500 15 5M8 16q.5-6 7-7" /><circle cx="13.500" cy="14" r="1.600" fill="#fff" stroke="none" /></svg></TraySlot>
          <svg width="21" height="18" viewBox="0 0 21 18" fill="none" stroke="#fff" strokeWidth="1.300"><path d="M1 6h3l4-4v14l-4-4H1zM11 6.500q1.500 2.500 0 5M14 4.500q3 4.500 0 9" /><path d="M17 2q4.500 7 0 14" opacity=".5" /></svg>
        </Tray>
        <Clock>21:33<br />10-04-2023</Clock>
        <Notice>
          <svg width="34" height="34" viewBox="0 0 34 34"><path d="M2 2h20v16H12l-4 4v-4H2z" fill="#fff" /><path d="M6 6.500h12M6 10h12M6 13.500h8" stroke="#222a33" strokeWidth="1.300" /><circle cx="21.500" cy="22" r="10" fill="#33383f" stroke="#8d9196" /><text x="21.500" y="27" textAnchor="middle" fontFamily="Noto Sans, sans-serif" fontSize="14" fontWeight="600" fill="#fff">3</text></svg>
        </Notice>
        <Peek /><Spacer $w={6} />
      </TaskBar>
    </Shell>
  );
}
